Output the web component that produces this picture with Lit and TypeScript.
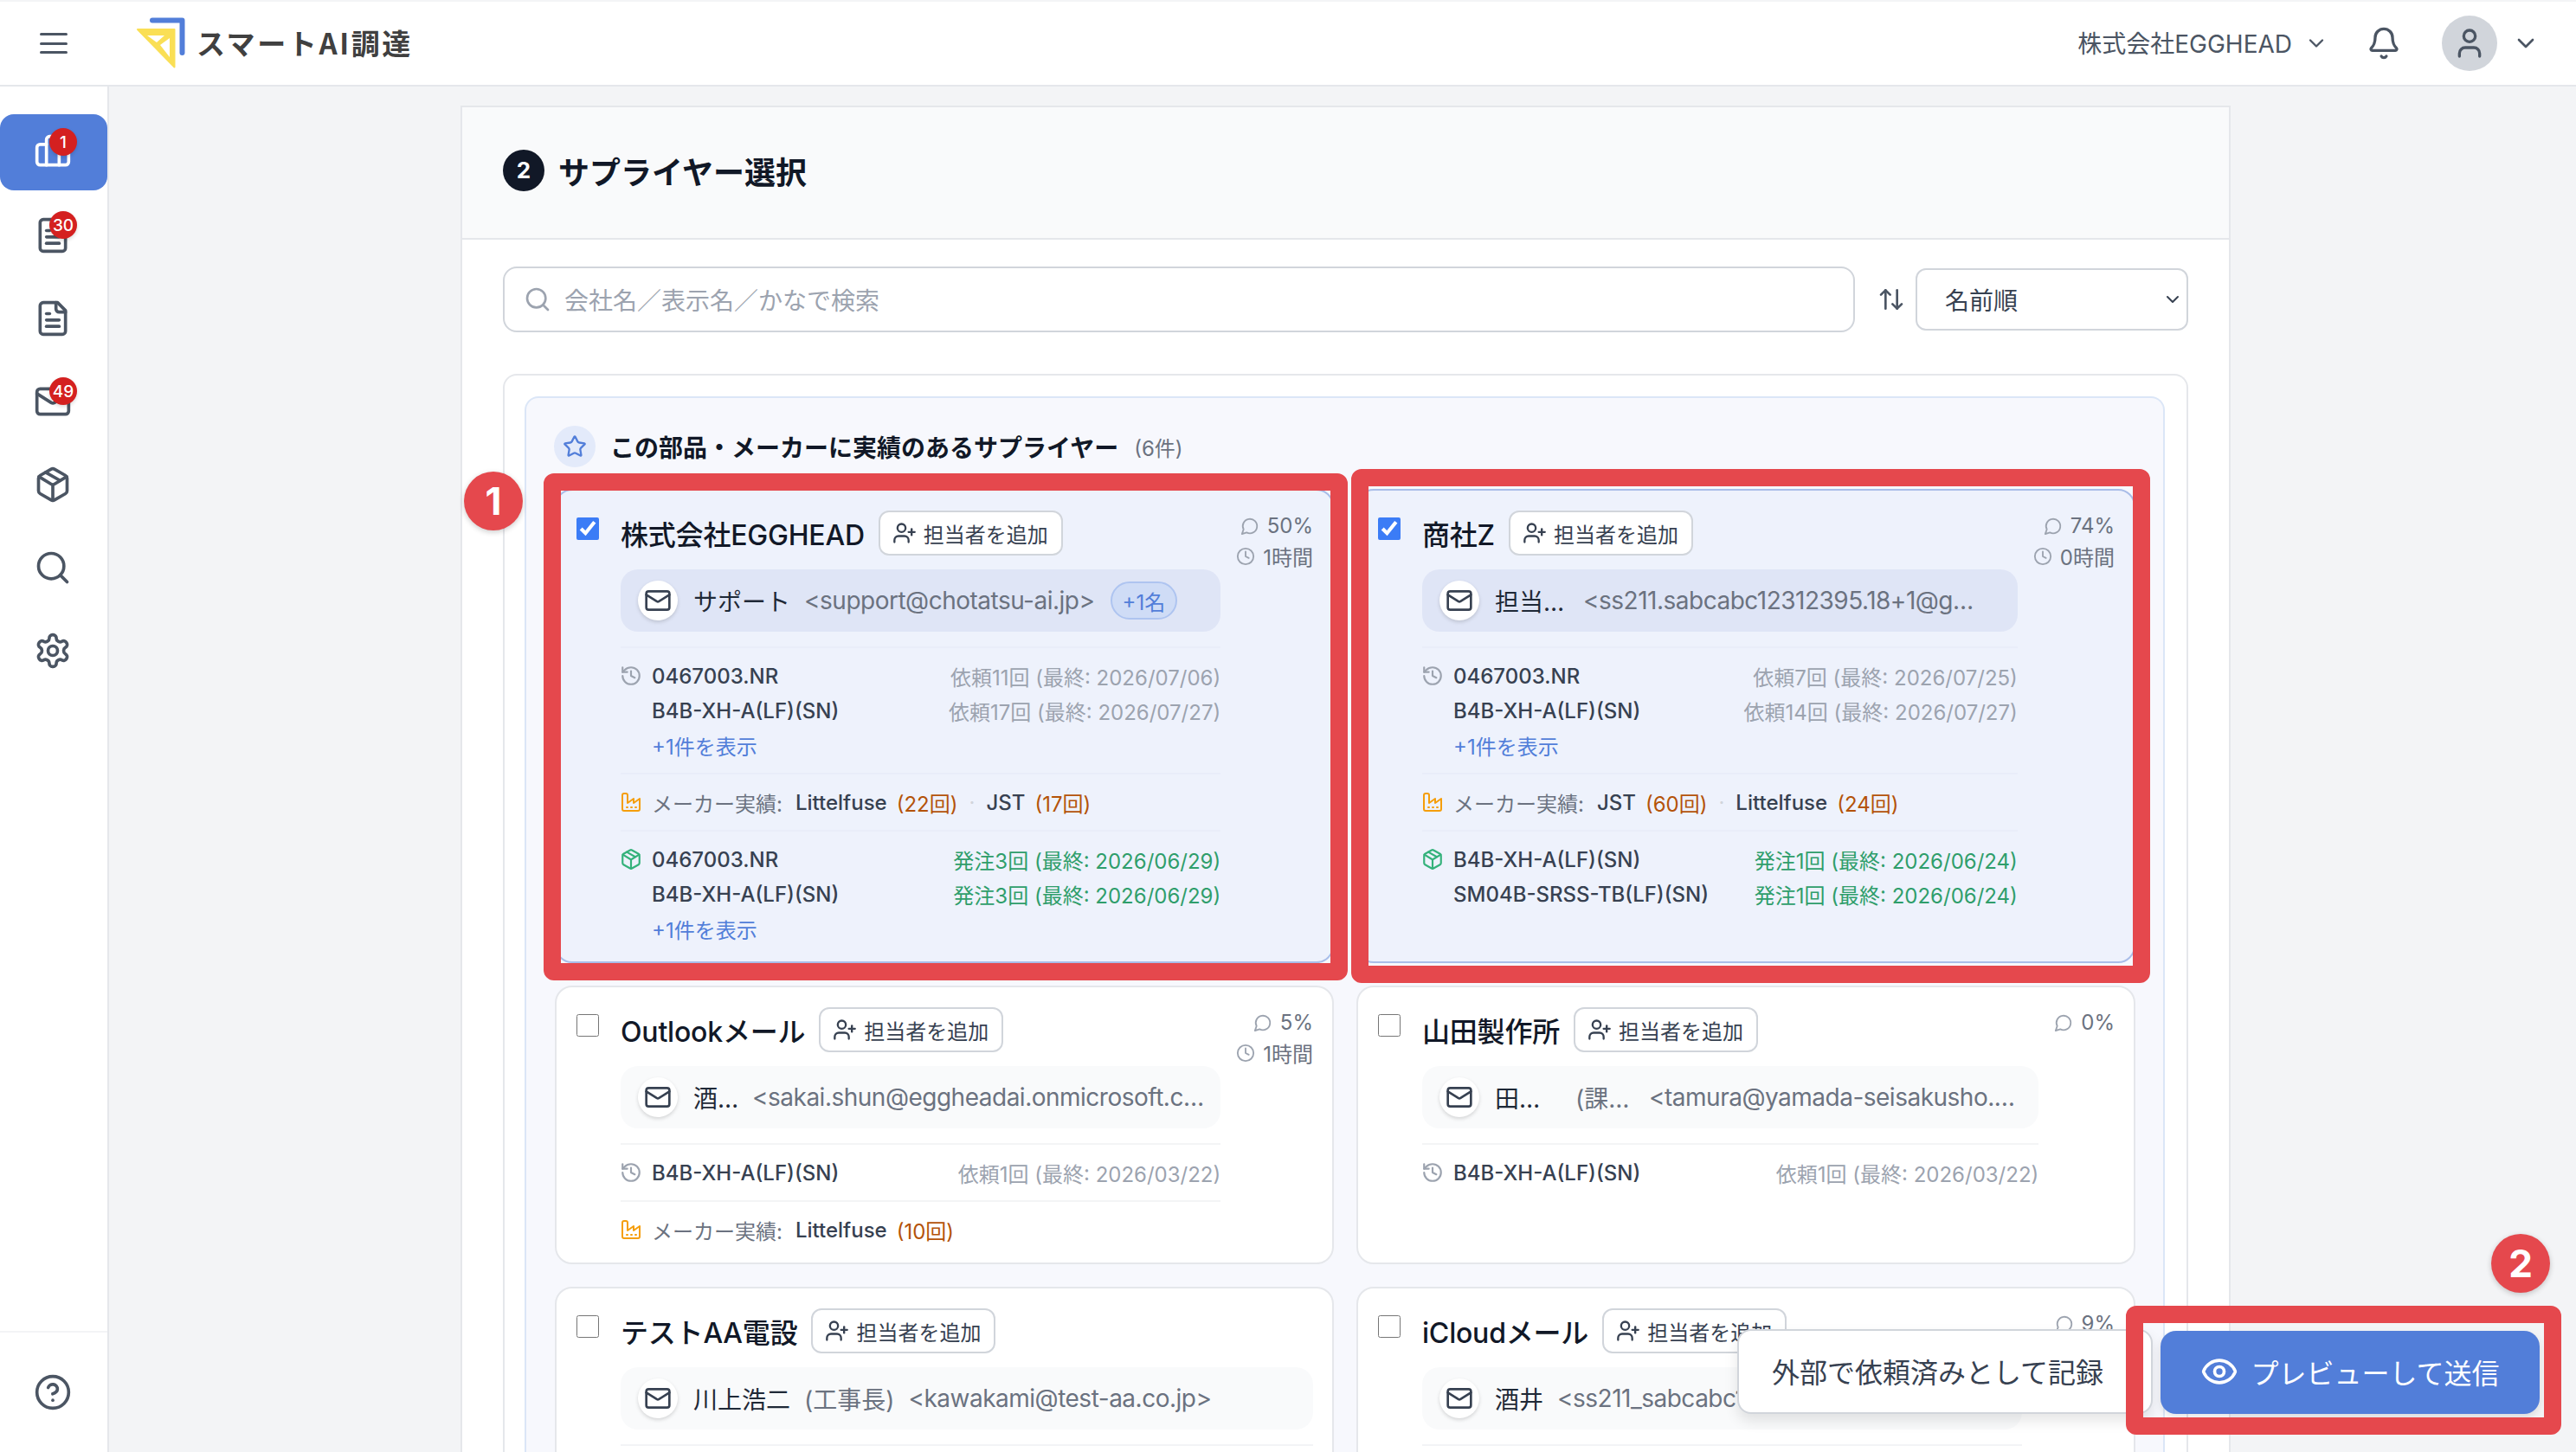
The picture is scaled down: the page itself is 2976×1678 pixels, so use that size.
import { LitElement, html, css, svg } from "lit";
import { customElement } from "lit/decorators.js";

const I: Record<string, any> = {
  chart: svg`<path d="M4 20h16a2 2 0 0 0 2-2v-8a2 2 0 0 0-2-2h-4V4a2 2 0 0 0-2-2h-4a2 2 0 0 0-2 2v3H4a2 2 0 0 0-2 2v9a2 2 0 0 0 2 2Z"/><path d="M8 7v13"/><path d="M16 8v12"/>`,
  file: svg`<path d="M15 2H6a2 2 0 0 0-2 2v16a2 2 0 0 0 2 2h12a2 2 0 0 0 2-2V7Z"/><path d="M14 2v4a2 2 0 0 0 2 2h4"/><path d="M10 9H8"/><path d="M16 13H8"/><path d="M16 17H8"/>`,
  mail: svg`<path d="m22 7-8.991 5.727a2 2 0 0 1-2.009 0L2 7"/><rect x="2" y="4" width="20" height="16" rx="2"/>`,
  pkg: svg`<path d="M11 21.73a2 2 0 0 0 2 0l7-4A2 2 0 0 0 21 16V8a2 2 0 0 0-1-1.73l-7-4a2 2 0 0 0-2 0l-7 4A2 2 0 0 0 3 8v8a2 2 0 0 0 1 1.73z"/><path d="M12 22V12"/><path d="m3.3 7 7.703 4.734a2 2 0 0 0 1.994 0L20.7 7"/><path d="m7.5 4.27 9 5.15"/>`,
  search: svg`<circle cx="11" cy="11" r="8"/><path d="m21 21-4.3-4.3"/>`,
  gear: svg`<path d="M12.22 2h-.44a2 2 0 0 0-2 2v.18a2 2 0 0 1-1 1.73l-.43.25a2 2 0 0 1-2 0l-.15-.08a2 2 0 0 0-2.73.73l-.22.38a2 2 0 0 0 .73 2.73l.15.1a2 2 0 0 1 1 1.72v.51a2 2 0 0 1-1 1.74l-.15.09a2 2 0 0 0-.73 2.73l.22.38a2 2 0 0 0 2.73.73l.15-.08a2 2 0 0 1 2 0l.43.25a2 2 0 0 1 1 1.73V20a2 2 0 0 0 2 2h.44a2 2 0 0 0 2-2v-.18a2 2 0 0 1 1-1.73l.43-.25a2 2 0 0 1 2 0l.15.08a2 2 0 0 0 2.73-.73l.22-.39a2 2 0 0 0-.73-2.73l-.15-.08a2 2 0 0 1-1-1.74v-.5a2 2 0 0 1 1-1.74l.15-.09a2 2 0 0 0 .73-2.73l-.22-.38a2 2 0 0 0-2.73-.73l-.15.08a2 2 0 0 1-2 0l-.43-.25a2 2 0 0 1-1-1.73V4a2 2 0 0 0-2-2z"/><circle cx="12" cy="12" r="3"/>`,
  help: svg`<circle cx="12" cy="12" r="10"/><path d="M9.09 9a3 3 0 0 1 5.83 1c0 2-3 3-3 3"/><path d="M12 17h.01"/>`,
  bell: svg`<path d="M10.268 21a2 2 0 0 0 3.464 0"/><path d="M3.262 15.326A1 1 0 0 0 4 17h16a1 1 0 0 0 .74-1.673C19.41 13.956 18 12.499 18 8A6 6 0 0 0 6 8c0 4.499-1.411 5.956-2.738 7.326"/>`,
  user: svg`<path d="M19 21v-2a4 4 0 0 0-4-4H9a4 4 0 0 0-4 4v2"/><circle cx="12" cy="7" r="4"/>`,
  userPlus: svg`<path d="M16 21v-2a4 4 0 0 0-4-4H6a4 4 0 0 0-4 4v2"/><circle cx="9" cy="7" r="4"/><path d="M19 8v6"/><path d="M22 11h-6"/>`,
  history: svg`<path d="M3 12a9 9 0 1 0 9-9 9.75 9.75 0 0 0-6.74 2.74L3 8"/><path d="M3 3v5h5"/><path d="M12 7v5l4 2"/>`,
  clock: svg`<circle cx="12" cy="12" r="10"/><path d="M12 6v6l4 2"/>`,
  msg: svg`<path d="M7.9 20A9 9 0 1 0 4 16.1L2 22Z"/>`,
  factory: svg`<path d="M2 20a2 2 0 0 0 2 2h16a2 2 0 0 0 2-2V8l-7 5V8l-7 5V4a2 2 0 0 0-2-2H4a2 2 0 0 0-2 2Z"/><path d="M17 18h1"/><path d="M12 18h1"/><path d="M7 18h1"/>`,
  star: svg`<path d="M11.525 2.295a.53.53 0 0 1 .95 0l2.31 4.679a2.123 2.123 0 0 0 1.595 1.16l5.166.756a.53.53 0 0 1 .294.904l-3.736 3.638a2.123 2.123 0 0 0-.611 1.878l.882 5.14a.53.53 0 0 1-.771.56l-4.618-2.428a2.122 2.122 0 0 0-1.973 0L6.396 21.01a.53.53 0 0 1-.77-.56l.881-5.139a2.122 2.122 0 0 0-.611-1.879L2.16 9.795a.53.53 0 0 1 .294-.906l5.165-.755a2.122 2.122 0 0 0 1.597-1.16z"/>`,
  sort: svg`<path d="m21 16-4 4-4-4"/><path d="M17 20V4"/><path d="m3 8 4-4 4 4"/><path d="M7 4v16"/>`,
  eye: svg`<path d="M2.062 12.348a1 1 0 0 1 0-.696 10.75 10.75 0 0 1 19.876 0 1 1 0 0 1 0 .696 10.75 10.75 0 0 1-19.876 0"/><circle cx="12" cy="12" r="3"/>`,
  chev: svg`<path d="m6 9 6 6 6-6"/>`,
};

const icon = (n: string, cls = "") =>
  html`<svg class="ic ${cls}" viewBox="0 0 24 24">${I[n]}</svg>`;

type Row = [string, string];
interface Contact { name: string; role?: string; email: string; extra?: string; nameW?: number; roleW?: number; }
interface Card {
  title: string; on?: boolean; pct?: string; hrs?: string; contact: Contact;
  hist?: Row[]; histMore?: boolean; makers?: [string, string][]; ord?: Row[]; ordMore?: boolean; stub?: boolean;
}

const P1 = "0467003.NR", P2 = "B4B-XH-A(LF)(SN)", P3 = "SM04B-SRSS-TB(LF)(SN)";
const cards: Card[] = [
  { title: "株式会社EGGHEAD", on: true, pct: "50%", hrs: "1時間",
    contact: { name: "サポート", email: "<support@chotatsu-ai.jp>", extra: "+1名" },
    hist: [[P1, "依頼11回 (最終: 2026/07/06)"], [P2, "依頼17回 (最終: 2026/07/27)"]], histMore: true,
    makers: [["Littelfuse", "(22回)"], ["JST", "(17回)"]],
    ord: [[P1, "発注3回 (最終: 2026/06/29)"], [P2, "発注3回 (最終: 2026/06/29)"]], ordMore: true },
  { title: "商社Z", on: true, pct: "74%", hrs: "0時間",
    contact: { name: "担当…", email: "<ss211.sabcabc12312395.18+1@g…", nameW: 86 },
    hist: [[P1, "依頼7回 (最終: 2026/07/25)"], [P2, "依頼14回 (最終: 2026/07/27)"]], histMore: true,
    makers: [["JST", "(60回)"], ["Littelfuse", "(24回)"]],
    ord: [[P2, "発注1回 (最終: 2026/06/24)"], [P3, "発注1回 (最終: 2026/06/24)"]] },
  { title: "Outlookメール", pct: "5%", hrs: "1時間",
    contact: { name: "酒…", email: "<sakai.shun@eggheadai.onmicrosoft.c…", nameW: 52 },
    hist: [[P2, "依頼1回 (最終: 2026/03/22)"]], makers: [["Littelfuse", "(10回)"]] },
  { title: "山田製作所", pct: "0%",
    contact: { name: "田…", role: "(課…", email: "<tamura@yamada-seisakusho.…", nameW: 77, roleW: 69 },
    hist: [[P2, "依頼1回 (最終: 2026/03/22)"]] },
  { title: "テストAA電設",
    contact: { name: "川上浩二", role: "(工事長)", email: "<kawakami@test-aa.co.jp>" }, stub: true },
  { title: "iCloudメール", pct: "9%", hrs: "1時間",
    contact: { name: "酒井", email: "<ss211_sabcabc12312395@icloud.com>" }, stub: true },
];

@customElement("app-root")
export class AppRoot extends LitElement {
  static styles = css`
    :host { display: block; height: 100vh; overflow: hidden; position: relative; background: #f3f4f6;
      font-family: Inter, "Noto Sans CJK JP", sans-serif; color: #111827; }
    * { box-sizing: border-box; }
    .ic { fill: none; stroke: currentColor; stroke-width: 2; stroke-linecap: round; stroke-linejoin: round; flex: none; display: block; }
    .app { height: 100%; padding-top: 2px; display: flex; flex-direction: column; }
    header { height: 98px; flex: none; background: #fff; border-bottom: 2px solid #e5e7eb; display: flex; align-items: center; padding: 0 42px 0 46px; color: #4b5563; }
    .menu { width: 32px; height: 24px; display: flex; flex-direction: column; justify-content: space-between; margin-right: 79px; }
    .menu i { display: block; height: 3px; background: #4b5563; border-radius: 2px; }
    .logo { width: 58px; height: 60px; flex: none; margin-right: 12px; }
    .brand { font-size: 33px; font-weight: 700; color: #404040; letter-spacing: 2.6px; white-space: nowrap; font-family: "Noto Sans CJK JP", sans-serif; padding-bottom: 3px; }
    .sp { flex: 1; }
    .co { font-size: 28px; white-space: nowrap; padding-bottom: 3px; }
    .h-chev { width: 28px; height: 28px; margin-left: 14px; }
    .bell { width: 40px; height: 40px; margin: 0 47px 0 44px; }
    .avatar { width: 64px; height: 64px; border-radius: 50%; background: #d1d5db; display: flex; align-items: center; justify-content: center; }
    .avatar .ic { width: 40px; height: 40px; }
    .a-chev { width: 32px; height: 32px; margin-left: 17px; }
    .content { flex: 1; min-height: 0; display: flex; }
    aside { width: 126px; flex: none; background: #fff; border-right: 2px solid #e5e7eb; display: flex; flex-direction: column; color: #4b5563; }
    nav { flex: 1; padding-top: 32px; display: flex; flex-direction: column; gap: 8px; }
    .item { height: 88px; position: relative; display: flex; align-items: center; justify-content: center; border-radius: 16px; padding-right: 2px; }
    .item.active { background: #527ed9; color: #fff; }
    .item .ic { width: 44px; height: 44px; }
    .badge { position: absolute; left: 57px; top: 16px; width: 32px; height: 32px; border-radius: 50%; background: #d42020; color: #fff; font-size: 19px; font-weight: 500; display: flex; align-items: center; justify-content: center; box-shadow: 0 2px 4px rgba(0,0,0,.15); }
    .foot { height: 140px; flex: none; border-top: 2px solid #f3f4f6; display: flex; align-items: center; justify-content: center; padding-right: 2px; }
    .foot .ic { width: 44px; height: 44px; }
    main { flex: 1; min-width: 0; overflow: hidden; padding: 22px 399px 0 406px; }
    .panel { background: #fff; border: 2px solid #e5e7eb; border-bottom: 0; min-height: 100%; }
    .p-head { height: 153px; background: #f9fafb; border-bottom: 2px solid #e5e7eb; display: flex; align-items: center; gap: 16px; padding: 0 47px 6px; }
    .step { width: 48px; height: 48px; border-radius: 50%; background: #111827; color: #fff; font-size: 26px; font-weight: 700; display: flex; align-items: center; justify-content: center; }
    .p-title { font-size: 36px; font-weight: 700; margin: 0; }
    .p-body { padding: 31px 47px 0; }
    .filters { display: flex; align-items: center; height: 76px; }
    .search { flex: 1; height: 76px; border: 2px solid #d1d5db; border-radius: 16px; display: flex; align-items: center; padding: 0 22px; gap: 15px; background: #fff; color: #9ca3af; font-size: 28px; }
    .search .ic { width: 32px; height: 32px; }
    .sort { width: 32px; height: 32px; margin: 0 12px 0 26px; color: #4b5563; }
    .select { width: 315px; height: 72px; border: 2px solid #d1d5db; border-radius: 12px; display: flex; align-items: center; justify-content: space-between; padding: 0 4px 0 32px; font-size: 28px; color: #374151; }
    .select .ic { width: 24px; height: 24px; }
    .box { margin-top: 48px; border: 2px solid #e5e7eb; border-bottom: 0; border-radius: 16px 16px 0 0; padding: 24px 25px 0 23px; }
    .sec-wrap { background: #f7f8fd; border: 2px solid #dbe6f7; border-bottom: 0; border-radius: 16px 16px 0 0; padding: 32px 32px 32px 33px; }
    .s-head { display: flex; align-items: center; height: 48px; margin: 0 0 25px -1px; }
    .s-star { width: 48px; height: 48px; border-radius: 50%; background: #e3eafa; color: #527ed9; display: flex; align-items: center; justify-content: center; margin-right: 17px; }
    .s-star .ic { width: 28px; height: 28px; }
    .s-title { font-size: 28px; font-weight: 700; }
    .s-count { font-size: 24px; color: #6b7280; margin-left: 18px; }
    .grid { display: grid; grid-template-columns: 1fr 1fr; gap: 26px; }
    .card { min-width: 0; display: flex; gap: 25px; padding: 23px 22px 18px 23px; background: #fff; border: 2px solid #e5e7eb; border-radius: 20px; }
    .card.on { background: #eef2fc; border-color: #a9bde8; }
    .cb { width: 26px; height: 26px; margin: 8px 0 0; flex: none; accent-color: #3b7cf6; }
    .card-body { flex: 1; min-width: 0; display: flex; gap: 18px; }
    .main-col { flex: 1; min-width: 0; }
    .title-row { display: flex; align-items: center; height: 52px; gap: 16px; }
    .name { font-size: 32px; font-weight: 500; white-space: nowrap; letter-spacing: -0.2px; }
    .add { height: 52px; width: 213px; flex: none; display: flex; align-items: center; gap: 8px; padding: 0 14px; background: #fff; border: 2px solid #d1d5db; border-radius: 12px; font-size: 24px; color: #374151; white-space: nowrap; }
    .add .ic { width: 28px; height: 28px; }
    .stats { flex: none; display: flex; flex-direction: column; align-items: flex-end; color: #6b7280; font-size: 24px; }
    .stat { display: flex; align-items: center; gap: 9px; height: 35px; white-space: nowrap; }
    .stat .ic { width: 22px; height: 22px; color: #9ca3af; }
    .contact { height: 72px; margin-top: 16px; background: #f9fafb; border-radius: 20px; display: flex; align-items: center; padding: 0 20px; font-size: 28px; white-space: nowrap; overflow: hidden; }
    .card.on .contact { background: #dfe5f6; }
    .c-ic { width: 46px; height: 46px; border-radius: 50%; background: #fff; display: flex; align-items: center; justify-content: center; flex: none; margin-right: 18px; box-shadow: 0 2px 4px rgba(0,0,0,.15); color: #374151; }
    .c-ic .ic { width: 32px; height: 32px; }
    .c-name { color: #1f2937; margin-right: 16px; flex: none; }
    .c-role { color: #6b7280; margin-right: 16px; flex: none; }
    .c-mail { color: #6b7280; flex: none; letter-spacing: -0.5px; }
    .pill { margin-left: 18px; height: 44px; padding: 0 12px; border-radius: 22px; background: #cfdcf6; border: 2px solid #aec4f0; color: #527ed9; font-size: 24px; display: flex; align-items: center; flex: none; }
    .sect { margin-top: 17px; border-top: 2px solid #f3f4f6; padding: 12px 0; display: flex; gap: 12px; font-size: 24px; }
    .card.on .sect { border-color: #e9edf9; }
    .sect + .sect { margin-top: 0; }
    .sect:last-child { padding-bottom: 0; }
    .sect.stub { min-height: 52px; }
    .s-ic { width: 24px; height: 40px; display: flex; align-items: center; justify-content: center; flex: none; }
    .s-ic .ic { width: 26px; height: 26px; }
    .s-ic.h { color: #9ca3af; }
    .s-ic.m { color: #f59e0b; }
    .s-ic.m .ic { width: 24px; height: 24px; }
    .s-ic.o { color: #34b27b; }
    .lines { flex: 1; min-width: 0; }
    .line { height: 40px; display: flex; align-items: center; justify-content: space-between; white-space: nowrap; }
    .part { color: #374151; font-weight: 500; }
    .hv { color: #9ca3af; }
    .ov { color: #2f9e6b; }
    .more { color: #527ed9; }
    .maker { height: 40px; display: flex; align-items: center; white-space: nowrap; }
    .m-label { color: #6b7280; margin-right: 15px; }
    .m-cnt { color: #b45309; margin-left: 11px; }
    .m-dot { color: #d1d5db; margin: 0 13px; }
    .popup { position: absolute; left: 2007px; top: 1536px; width: 480px; height: 98px; background: #fff; border: 2px solid #d1d5db; border-radius: 16px; display: flex; align-items: center; padding: 0 0 2px 38px; font-size: 32px; color: #374151; box-shadow: 0 8px 16px rgba(0,0,0,.1); white-space: nowrap; }
    .cta { position: absolute; left: 2496px; top: 1538px; width: 438px; height: 96px; background: #527ed9; border-radius: 18px; color: #fff; font-size: 32px; display: flex; align-items: center; justify-content: center; gap: 14px; padding-bottom: 2px; box-shadow: 0 4px 8px rgba(0,0,0,.1); white-space: nowrap; }
    .cta .ic { width: 44px; height: 44px; }
    .mark { position: absolute; border: 20px solid #e5484d; border-radius: 12px; pointer-events: none; }
    .m1 { left: 628px; top: 547px; width: 929px; height: 586px; }
    .m2 { left: 1561px; top: 542px; width: 923px; height: 594px; }
    .m3 { left: 2456px; top: 1509px; width: 503px; height: 149px; }
    .num { position: absolute; width: 68px; height: 68px; border-radius: 50%; background: #e5484d; color: #fff; font-size: 44px; font-weight: 700; display: flex; align-items: center; justify-content: center; box-shadow: 0 2px 6px rgba(0,0,0,.2); }
    .n1 { left: 536px; top: 545px; }
    .n2 { left: 2878px; top: 1426px; }
  `;

  private renderLines(rows: Row[], cls: string, more?: boolean) {
    return html`<div class="lines">
      ${rows.map(([a, b]) => html`<div class="line"><span class="part">${a}</span><span class=${cls}>${b}</span></div>`)}
      ${more ? html`<div class="line"><span class="more">+1件を表示</span></div>` : ""}
    </div>`;
  }

  private renderCard(c: Card) {
    const k = c.contact;
    return html`<div class="card ${c.on ? "on" : ""}">
      <input class="cb" type="checkbox" .checked=${!!c.on} />
      <div class="card-body">
        <div class="main-col">
          <div class="title-row">
            <span class="name">${c.title}</span>
            <span class="add">${icon("userPlus")}担当者を追加</span>
          </div>
          <div class="contact">
            <span class="c-ic">${icon("mail")}</span>
            <span class="c-name" style=${k.nameW ? `width:${k.nameW}px` : ""}>${k.name}</span>
            ${k.role ? html`<span class="c-role" style=${k.roleW ? `width:${k.roleW}px` : ""}>${k.role}</span>` : ""}
            <span class="c-mail">${k.email}</span>
            ${k.extra ? html`<span class="pill">${k.extra}</span>` : ""}
          </div>
          ${c.hist ? html`<div class="sect"><span class="s-ic h">${icon("history")}</span>${this.renderLines(c.hist, "hv", c.histMore)}</div>` : ""}
          ${c.makers ? html`<div class="sect"><span class="s-ic m">${icon("factory")}</span>
            <div class="maker"><span class="m-label">メーカー実績:</span>
              ${c.makers.map(([n, v], i) => html`${i ? html`<span class="m-dot">·</span>` : ""}<span class="part">${n}</span><span class="m-cnt">${v}</span>`)}
            </div></div>` : ""}
          ${c.ord ? html`<div class="sect"><span class="s-ic o">${icon("pkg")}</span>${this.renderLines(c.ord, "ov", c.ordMore)}</div>` : ""}
          ${c.stub ? html`<div class="sect stub"></div>` : ""}
        </div>
        ${c.pct ? html`<div class="stats">
          <span class="stat">${icon("msg")}${c.pct}</span>
          ${c.hrs ? html`<span class="stat">${icon("clock")}${c.hrs}</span>` : ""}
        </div>` : ""}
      </div>
    </div>`;
  }

  render() {
    const nav: [string, string?][] = [["chart", "1"], ["file", "30"], ["file"], ["mail", "49"], ["pkg"], ["search"], ["gear"]];
    return html`<div class="app">
      <header>
        <div class="menu"><i></i><i></i><i></i></div>
        <svg class="logo" viewBox="0 0 58 60">
          <path d="M19 3.5H53.5V41" fill="none" stroke="#527ed9" stroke-width="6" stroke-linecap="round" stroke-linejoin="round"/>
          <path d="M2 14H44.500V57.500Z" fill="#fadf55" stroke="#fadf55" stroke-width="2" stroke-linejoin="round"/>
          <path d="M13 21H33L24 29Z" fill="#fff"/>
          <path d="M28 32L39 24V46Z" fill="#fff"/>
        </svg>
        <span class="brand">スマートAI調達</span>
        <span class="sp"></span>
        <span class="co">株式会社EGGHEAD</span>
        ${icon("chev", "h-chev")}
        ${icon("bell", "bell")}
        <span class="avatar">${icon("user")}</span>
        ${icon("chev", "a-chev")}
      </header>
      <div class="content">
        <aside>
          <nav>
            ${nav.map(([n, b], i) => html`<div class="item ${i === 0 ? "active" : ""}">${icon(n)}${b ? html`<span class="badge">${b}</span>` : ""}</div>`)}
          </nav>
          <div class="foot">${icon("help")}</div>
        </aside>
        <main>
          <section class="panel">
            <div class="p-head"><span class="step">2</span><h2 class="p-title">サプライヤー選択</h2></div>
            <div class="p-body">
              <div class="filters">
                <div class="search">${icon("search")}<span>会社名／表示名／かなで検索</span></div>
                ${icon("sort", "sort")}
                <div class="select"><span>名前順</span>${icon("chev")}</div>
              </div>
              <div class="box">
                <div class="sec-wrap">
                  <div class="s-head">
                    <span class="s-star">${icon("star")}</span>
                    <span class="s-title">この部品・メーカーに実績のあるサプライヤー</span>
                    <span class="s-count">(6件)</span>
                  </div>
                  <div class="grid">${cards.map((c) => this.renderCard(c))}</div>
                </div>
              </div>
            </div>
          </section>
        </main>
      </div>
      <div class="popup">外部で依頼済みとして記録</div>
      <div class="cta">${icon("eye")}プレビューして送信</div>
      <div class="mark m1"></div>
      <div class="mark m2"></div>
      <div class="mark m3"></div>
      <div class="num n1">1</div>
      <div class="num n2">2</div>
    </div>`;
  }
}
